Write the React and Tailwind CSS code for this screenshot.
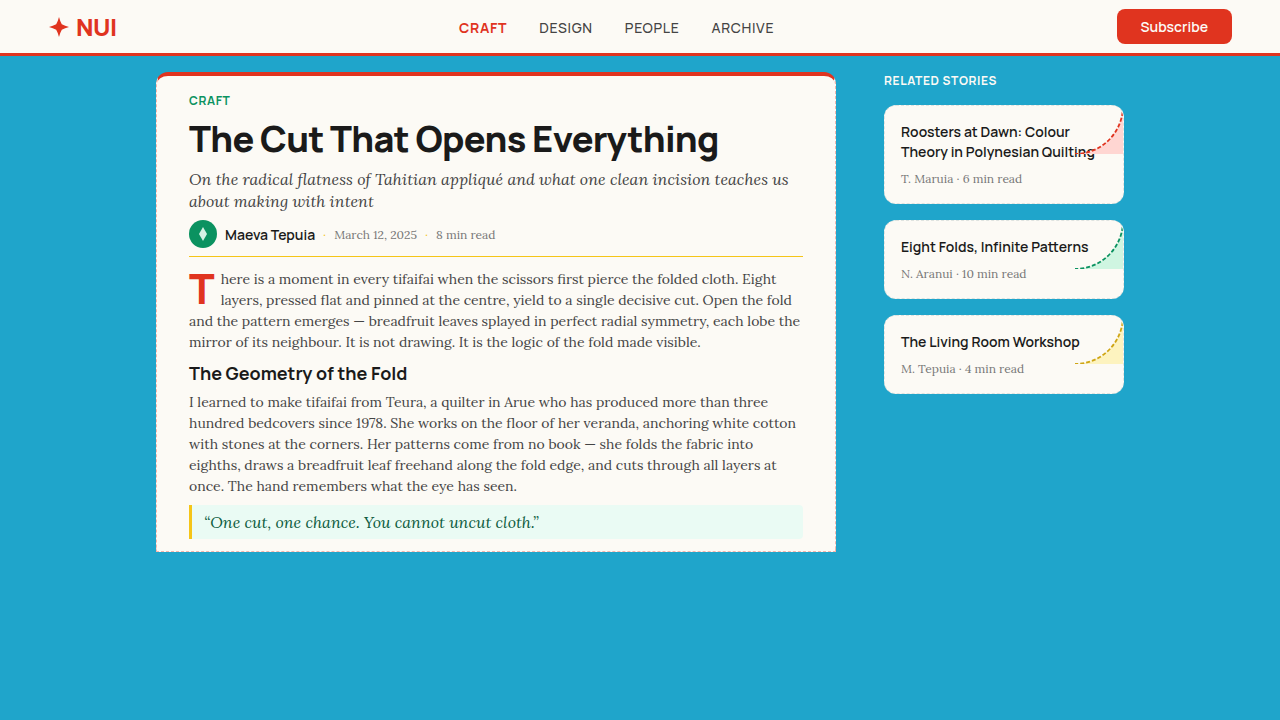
const navItems = [
  { label: "Craft", active: true },
  { label: "Design" },
  { label: "People" },
  { label: "Archive" },
];

const stories = [
  {
    title: "Roosters at Dawn: Colour Theory in Polynesian Quilting",
    meta: "T. Maruia · 6 min read",
    fill: "#ffd6d2",
    stroke: "#e0341f",
  },
  {
    title: "Eight Folds, Infinite Patterns",
    meta: "N. Aranui · 10 min read",
    fill: "#cff5e1",
    stroke: "#0b9260",
  },
  {
    title: "The Living Room Workshop",
    meta: "M. Tepuia · 4 min read",
    fill: "#fdf3bf",
    stroke: "#cfa514",
  },
];

function Header() {
  return (
    <header className="flex items-center justify-between border-b-3 border-[#e0341f] bg-[#fcfaf5] px-12 py-[9px]">
      <a
        href="#"
        className="flex items-center gap-1.5 text-[24px] leading-8 font-extrabold tracking-[-0.02em] text-[#e0341f]"
      >
        <svg width="22" height="22" viewBox="0 0 22 22" fill="currentColor" aria-hidden="true">
          <path d="M11 1 Q12 5 13.8 8.2 Q17 10 21 11 Q17 12 13.8 13.8 Q12 17 11 21 Q10 17 8.2 13.8 Q5 12 1 11 Q5 10 8.2 8.2 Q10 5 11 1 Z" />
        </svg>
        NUI
      </a>
      <nav className="flex gap-8 pt-0.5">
        {navItems.map((item) => (
          <a
            key={item.label}
            href="#"
            className={
              item.active
                ? "text-[14px] leading-5 font-bold tracking-wider text-[#e0341f] uppercase"
                : "text-[14px] leading-5 font-medium tracking-wider text-[#444] uppercase"
            }
          >
            {item.label}
          </a>
        ))}
      </nav>
      <button type="button" className="rounded-lg bg-[#e0341f] px-6 py-2 text-[14px] leading-[19px] font-semibold text-[#fcfaf5]">
        Subscribe
      </button>
    </header>
  );
}

function StoryCard({ story }) {
  return (
    <a
      href="#"
      className="relative block overflow-hidden rounded-xl border border-dashed border-[#dfe3df] bg-[#fcfaf5] p-4"
    >
      <h3 className="text-[14px] leading-5 font-semibold text-[#1a1a1a]">{story.title}</h3>
      <p className="mt-2 font-['Lora','Noto_Serif','Liberation_Serif',serif] text-[12px] leading-[17px] text-[#777]">
        {story.meta}
      </p>
      <svg className="absolute top-0 right-0" width="48" height="48" viewBox="0 0 48 48" aria-hidden="true">
        <path d="M48 0 A48 48 0 0 1 0 48 L48 48 Z" fill={story.fill} />
        <path d="M48 0 A48 48 0 0 1 0 48" fill="none" stroke={story.stroke} strokeWidth="1.8" strokeDasharray="4 2" />
      </svg>
    </a>
  );
}

function Article() {
  return (
    <article className="min-w-0 flex-1 self-start rounded-t-xl border border-t-4 border-dashed border-[#f5b5ab] border-t-[#e0341f] bg-[#fcfaf5] px-8 pt-4 pb-3 [border-top-style:solid]">
      <p className="text-[12px] leading-[18px] font-bold tracking-wider text-[#0b9260] uppercase">Craft</p>
      <h1 className="mt-2 text-[36px] leading-[42px] font-extrabold tracking-[-0.02em] text-[#1a1a1a]">
        The Cut That Opens Everything
      </h1>
      <p className="mt-2 font-['Lora','Noto_Serif','Liberation_Serif',serif] text-[16px] leading-[22px] text-[#444] italic">
        On the radical flatness of Tahitian appliqué and what one clean incision teaches us about making with intent
      </p>
      <div className="mt-2 flex items-center gap-2 border-b border-[#f5c518] pb-2 font-['Lora','Noto_Serif','Liberation_Serif',serif] text-[12px] leading-[17px] text-[#777]">
        <span className="flex size-7 items-center justify-center rounded-full bg-[#0b9260]">
          <svg width="8" height="14" viewBox="0 0 8 14" fill="#d5f2e4" aria-hidden="true">
            <path d="M4 0 L8 7 L4 14 L0 7 Z" />
          </svg>
        </span>
        <span className="font-['Manrope','Inter',sans-serif] text-[14px] font-semibold text-[#1a1a1a]">Maeva Tepuia</span>
        <span className="text-[#f5c518]">·</span>
        <time dateTime="2025-03-12">March 12, 2025</time>
        <span className="text-[#f5c518]">·</span>
        <span>8 min read</span>
      </div>
      <div className="mt-3 font-['Lora','Noto_Serif','Liberation_Serif',serif] text-[14px] leading-[21px] text-[#444]">
        <p>
          <span className="float-left pt-0.5 pr-1.5 font-['Manrope','Inter',sans-serif] text-[42px] leading-[34px] font-extrabold text-[#e0341f]">
            T
          </span>
          here is a moment in every tifaifai when the scissors first pierce the folded cloth. Eight layers, pressed flat
          and pinned at the centre, yield to a single decisive cut. Open the fold and the pattern emerges — breadfruit
          leaves splayed in perfect radial symmetry, each lobe the mirror of its neighbour. It is not drawing. It is the
          logic of the fold made visible.
        </p>
        <h2 className="mt-2 mb-[7px] font-['Manrope','Inter',sans-serif] text-[18px] leading-6 font-bold text-[#1a1a1a]">
          The Geometry of the Fold
        </h2>
        <p>
          I learned to make tifaifai from Teura, a quilter in Arue who has produced more than three hundred bedcovers
          since 1978. She works on the floor of her veranda, anchoring white cotton with stones at the corners. Her
          patterns come from no book — she folds the fabric into eighths, draws a breadfruit leaf freehand along the fold
          edge, and cuts through all layers at once. The hand remembers what the eye has seen.
        </p>
      </div>
      <blockquote className="mt-2 rounded-r border-l-3 border-[#f5c518] bg-[#eafbf4] px-3 py-1 font-['Lora','Noto_Serif','Liberation_Serif',serif] text-[16px] leading-[26px] text-[#0c5c3e] italic">
        “One cut, one chance. You cannot uncut cloth.”
      </blockquote>
    </article>
  );
}

export default function App() {
  return (
    <div className="min-h-screen bg-[#1fa5cb] font-['Manrope','Inter',sans-serif] antialiased">
      <Header />
      <main className="mx-auto flex max-w-[968px] gap-12 pt-4">
        <Article />
        <aside className="w-60 shrink-0">
          <h2 className="text-[12px] leading-[17px] font-bold tracking-wider text-[#fcfaf5] uppercase">
            Related Stories
          </h2>
          <div className="mt-4 flex flex-col gap-4">
            {stories.map((story) => (
              <StoryCard key={story.title} story={story} />
            ))}
          </div>
        </aside>
      </main>
    </div>
  );
}
